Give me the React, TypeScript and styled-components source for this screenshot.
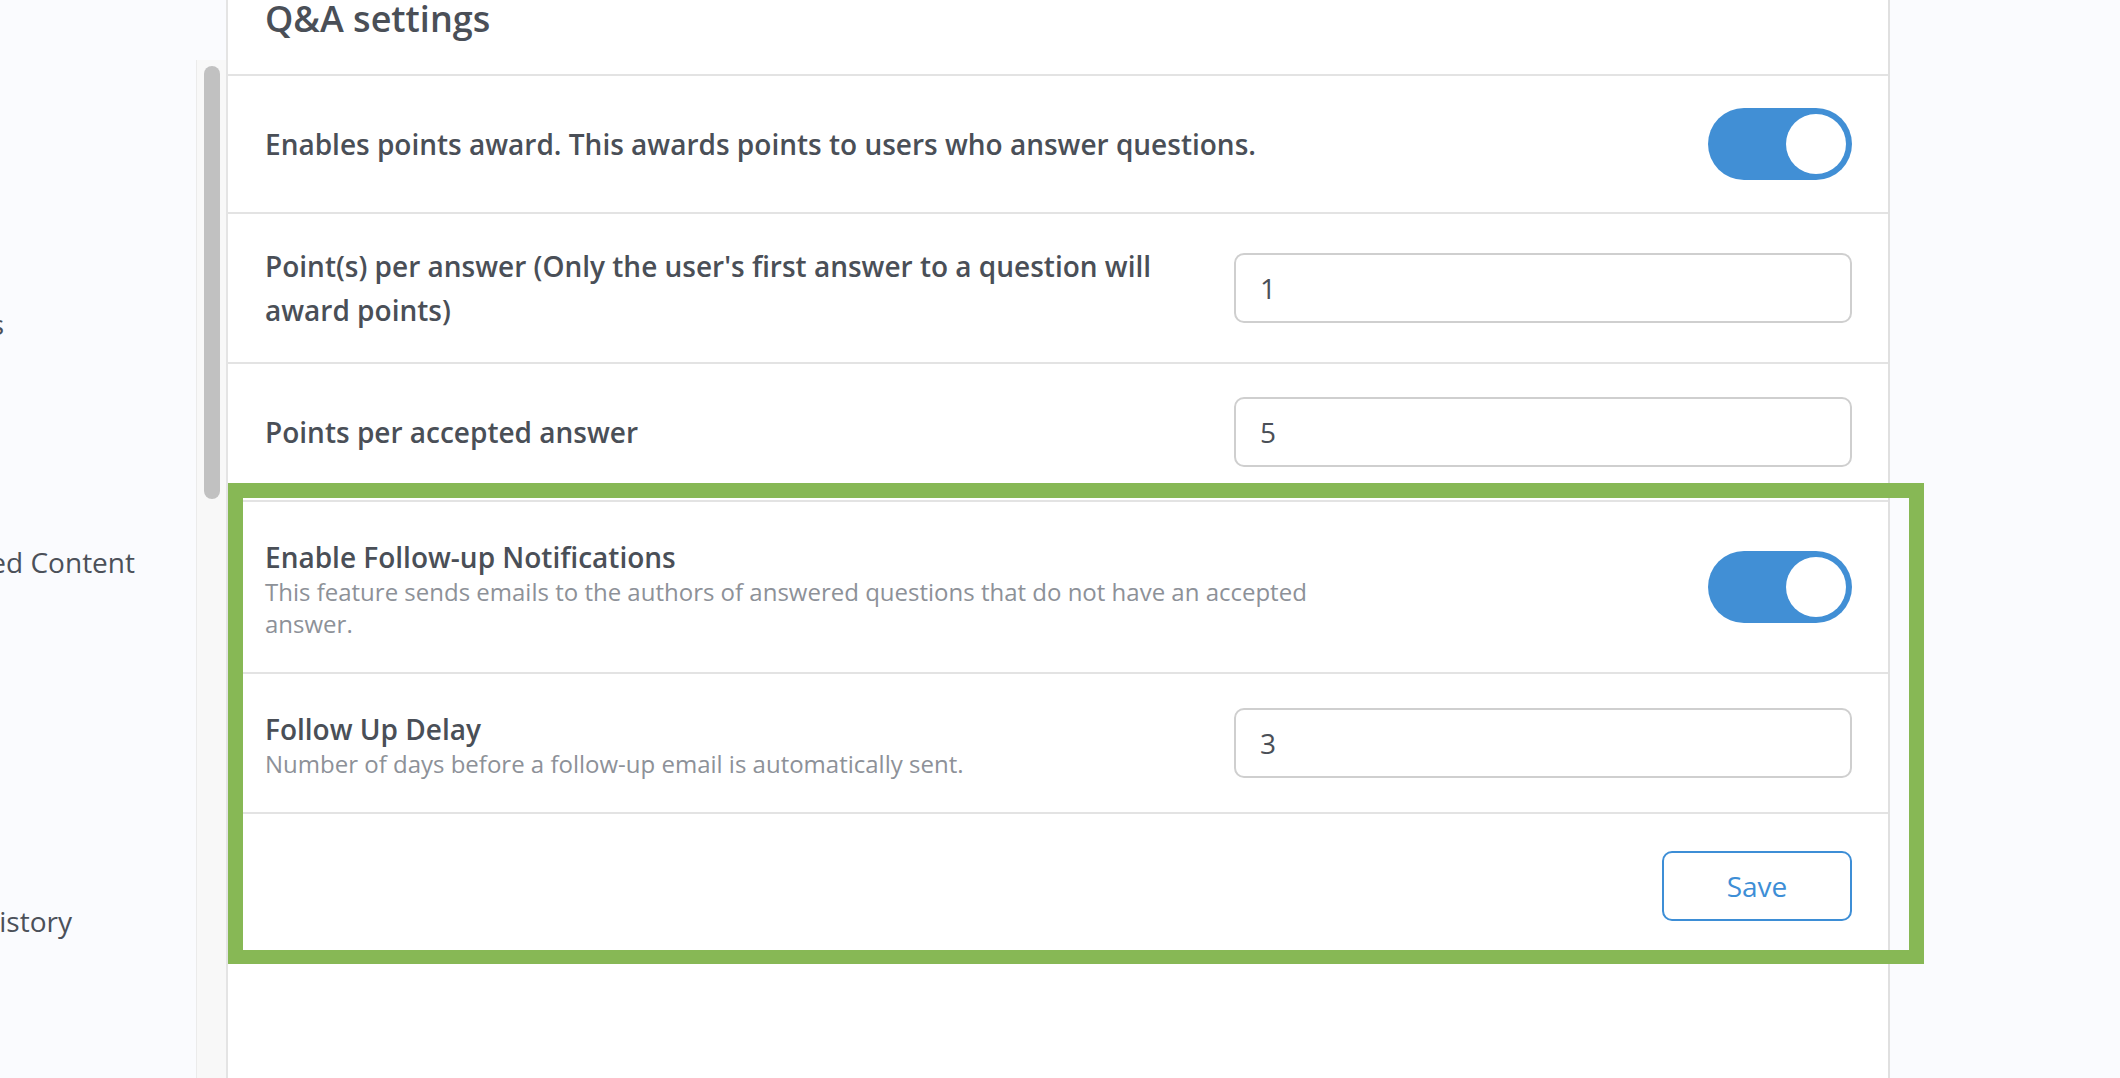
import React from "react";
import styled, { createGlobalStyle } from "styled-components";

const GlobalStyle = createGlobalStyle`
  html, body {
    margin: 0;
    padding: 0;
    background: #fafbfe;
    font-family: "Open Sans", "Noto Sans", sans-serif;
    color: #4a4f57;
  }
  * {
    box-sizing: border-box;
  }
`;

const Page = styled.div`
  position: relative;
  display: flex;
  height: 1078px;
  overflow: hidden;
  background: #fafbfe;
`;

const Sidebar = styled.nav`
  width: 196px;
  flex-shrink: 0;
  display: flex;
  flex-direction: column;
  overflow: hidden;
`;

const NavItem = styled.div<{ $end: number; $gap: number }>`
  display: flex;
  justify-content: flex-end;
  width: ${(p) => p.$end}px;
  margin-top: ${(p) => p.$gap}px;
  font-size: 28px;
  line-height: 44px;
  color: #4b5059;
  white-space: nowrap;
`;

const Track = styled.div`
  width: 30px;
  flex-shrink: 0;
  margin-top: 60px;
  padding: 6px 0 0 7px;
  background: #f8f8f8;
  border-left: 1px solid #ebebeb;
`;

const Thumb = styled.div`
  width: 16px;
  height: 433px;
  border-radius: 8px;
  background: #c1c1c1;
`;

const Panel = styled.main`
  width: 1664px;
  flex-shrink: 0;
  display: flex;
  flex-direction: column;
  background: #ffffff;
  border-left: 2px solid #e4e4e4;
  border-right: 2px solid #e0e0e0;
`;

const Header = styled.div`
  height: 74px;
  padding-left: 37px;
`;

const Title = styled.h2`
  margin: 0;
  font-size: 36px;
  line-height: 38px;
  font-weight: 600;
  color: #4a4f57;
`;

const Row = styled.div<{ $h?: number }>`
  display: flex;
  align-items: center;
  justify-content: space-between;
  gap: 40px;
  height: ${(p) => (p.$h ? `${p.$h}px` : "auto")};
  padding: 0 36px 0 37px;
  border-top: 2px solid #e3e3e3;
`;

const Footer = styled.div`
  display: flex;
  justify-content: flex-end;
  padding: 37px 36px 0 37px;
  border-top: 2px solid #e3e3e3;
`;

const TextCol = styled.div<{ $max?: number }>`
  flex: 1;
  max-width: ${(p) => (p.$max ? `${p.$max}px` : "none")};
`;

const Label = styled.div`
  font-size: 28px;
  line-height: 44px;
  font-weight: 600;
  color: #4a4f57;
`;

const Description = styled.div`
  margin-top: -3px;
  font-size: 24px;
  line-height: 32px;
  color: #8d9198;
`;

const Input = styled.input`
  width: 618px;
  height: 70px;
  flex-shrink: 0;
  padding: 0 24px;
  border: 2px solid #cfcfcf;
  border-radius: 10px;
  font-family: inherit;
  font-size: 28px;
  color: #4a4f57;
  background: #ffffff;
  outline: none;
`;

const Toggle = styled.div<{ $on: boolean }>`
  position: relative;
  width: 144px;
  height: 72px;
  flex-shrink: 0;
  border-radius: 36px;
  background: ${(p) => (p.$on ? "#418fd5" : "#cccccc")};
`;

const Knob = styled.span<{ $on: boolean }>`
  position: absolute;
  top: 6px;
  left: ${(p) => (p.$on ? "78px" : "6px")};
  width: 60px;
  height: 60px;
  border-radius: 50%;
  background: #ffffff;
`;

const SaveButton = styled.button`
  width: 190px;
  height: 70px;
  border: 2px solid #3d8ed6;
  border-radius: 10px;
  background: #ffffff;
  font-family: inherit;
  font-size: 28px;
  color: #3d8ed6;
  cursor: pointer;
`;

const Highlight = styled.div`
  position: absolute;
  left: 228px;
  top: 483px;
  width: 1696px;
  height: 481px;
  border: 15px solid #87b855;
  border-bottom-width: 14px;
  pointer-events: none;
`;

function Switch({ on }: { on: boolean }) {
  return (
    <Toggle $on={on}>
      <Knob $on={on} />
    </Toggle>
  );
}

export default function App() {
  return (
    <>
      <GlobalStyle />
      <Page>
        <Sidebar>
          <NavItem $end={4} $gap={302}>
            <span>Topics</span>
          </NavItem>
          <NavItem $end={135} $gap={194}>
            <span>Featured Content</span>
          </NavItem>
          <NavItem $end={72} $gap={315}>
            <span>History</span>
          </NavItem>
        </Sidebar>
        <Track>
          <Thumb />
        </Track>
        <Panel>
          <Header>
            <Title>Q&amp;A settings</Title>
          </Header>
          <Row $h={138}>
            <TextCol>
              <Label>Enables points award. This awards points to users who answer questions.</Label>
            </TextCol>
            <Switch on />
          </Row>
          <Row $h={150}>
            <TextCol>
              <Label>
                Point(s) per answer (Only the user's first answer to a question will award points)
              </Label>
            </TextCol>
            <Input defaultValue="1" />
          </Row>
          <Row $h={138}>
            <TextCol>
              <Label>Points per accepted answer</Label>
            </TextCol>
            <Input defaultValue="5" />
          </Row>
          <Row $h={172}>
            <TextCol $max={1100}>
              <Label>Enable Follow-up Notifications</Label>
              <Description>
                This feature sends emails to the authors of answered questions that do not have an accepted
                answer.
              </Description>
            </TextCol>
            <Switch on />
          </Row>
          <Row $h={140}>
            <TextCol>
              <Label>Follow Up Delay</Label>
              <Description>Number of days before a follow-up email is automatically sent.</Description>
            </TextCol>
            <Input defaultValue="3" />
          </Row>
          <Footer>
            <SaveButton>Save</SaveButton>
          </Footer>
        </Panel>
        <Highlight />
      </Page>
    </>
  );
}
